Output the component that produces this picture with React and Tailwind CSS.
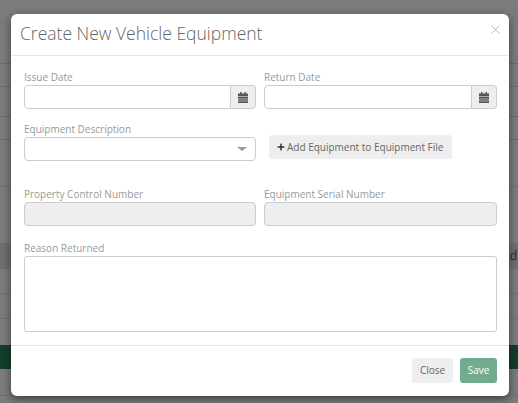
import React from "react";
import { FaPlus } from "react-icons/fa";

const font = "font-['Open_Sans',sans-serif]";

const Field = ({ label, children, className = "" }) => (
  <div className={`flex flex-col ${className}`}>
    <label className="text-[10px] leading-[14px] mb-[1px] text-[#999]">{label}</label>
    {children}
  </div>
);

// glyphicon style calendar, solid with banded rows
const CalendarIcon = () => (
  <svg width="10" height="11" viewBox="0 0 10 11" fill="#555">
    <path d="M2 0h1.5v1.5H6.500V0H8v1.500h2V11H0V1.500h2z" />
    <path d="M0 4.500h10M0 7h10M0 9h10" stroke="#eee" strokeWidth="0.6" />
  </svg>
);

const DateInput = () => (
  <div className="flex h-[24px]">
    <input className="flex-1 min-w-0 border border-[#ccc] rounded-l-[4px] bg-white" />
    <span className="w-[25px] flex items-center justify-center border border-l-0 border-[#ccc] rounded-r-[4px] bg-[#eee]">
      <CalendarIcon />
    </span>
  </div>
);

const Disabled = () => (
  <div className="h-[24px] border border-[#ccc] rounded-[4px] bg-[#eee]" />
);

export default function App() {
  return (
    <div className={`relative w-[518px] h-[403px] overflow-hidden bg-[#7b7b7b] ${font}`}>
      {/* page behind the backdrop */}
      <div className="flex flex-col">
        <div className="h-[64px] border-b border-[#6a6a6a]" />
        <div className="h-[23px] border-b border-[#6a6a6a]" />
        <div className="h-[30px] border-b border-[#6a6a6a]" />
        <div className="h-[23px] border-b border-[#6a6a6a]" />
        <div className="h-[47px] border-b border-[#6f6f6f]" />
        <div className="h-[56px]" />
        <div className="h-[26px] bg-[#6f6f6f] flex justify-end items-center text-[12px] text-[#2a2a2a] pr-[1px]">d</div>
        <div className="h-[25px] border-b border-[#6f6f6f]" />
        <div className="h-[25px] border-b border-[#6f6f6f]" />
        <div className="h-[26px]" />
        <div className="h-[24px] bg-[#123f2b]" />
        <div className="h-[27px] border-b border-[#6f6f6f]" />
      </div>

      {/* modal */}
      <div className="absolute left-[11px] top-[14px] w-[498px] h-[382px] flex flex-col bg-white rounded-[6px] shadow-[0_3px_9px_rgba(0,0,0,0.5)]">
        <div className="relative h-[42px] border-b border-[#e5e5e5] pl-[9px] pt-[7px]">
          <h4 className="text-[17.5px] leading-[25px] font-light text-[#666]">Create New Vehicle Equipment</h4>
          <svg className="absolute right-[9px] top-[11px]" width="9" height="9" viewBox="0 0 9 9" stroke="#aaa" strokeWidth="0.8" fill="none">
            <path d="M0.5 0.5L8.5 8.5M8.500 0.5L0.5 8.5" />
          </svg>
        </div>

        <div className="flex-1 pl-[13px] pr-[12px] pt-[14px] flex flex-col">
          <div className="grid grid-cols-[232px_233px] gap-x-[8px]">
            <Field label="Issue Date"><DateInput /></Field>
            <Field label="Return Date"><DateInput /></Field>
          </div>

          <div className="grid grid-cols-[232px_233px] gap-x-[8px] mt-[13px]">
            <Field label="Equipment Description">
              <div className="relative h-[24px] border border-[#ccc] rounded-[4px] bg-white">
                <span className="absolute right-[8px] top-[9px] border-x-[5px] border-x-transparent border-t-[4px] border-t-[#999]" />
              </div>
            </Field>
            <div className="pl-[5px] pt-[13px]">
              <button className="h-[24px] pl-[8px] pr-[9px] flex items-center gap-[2px] rounded-[3px] bg-[#eee] text-[10px] text-[#666]">
                <FaPlus size={8} className="text-[#333]" />
                Add Equipment to Equipment File
              </button>
            </div>
          </div>

          <div className="grid grid-cols-[232px_233px] gap-x-[8px] mt-[26px]">
            <Field label="Property Control Number"><Disabled /></Field>
            <Field label="Equipment Serial Number"><Disabled /></Field>
          </div>

          <Field label="Reason Returned" className="mt-[15px]">
            <textarea className="h-[76px] border border-[#ccc] rounded-[3px] bg-white resize-none" />
          </Field>
        </div>

        <div className="h-[51px] border-t border-[#e5e5e5] flex justify-end items-start gap-[7px] pt-[12px] pr-[12px]">
          <button className="w-[41px] h-[25px] rounded-[3px] bg-[#eee] text-[10px] text-[#666]">Close</button>
          <button className="w-[37px] h-[25px] rounded-[3px] bg-[#73ab8f] text-[10px] text-white">Save</button>
        </div>
      </div>
    </div>
  );
}
